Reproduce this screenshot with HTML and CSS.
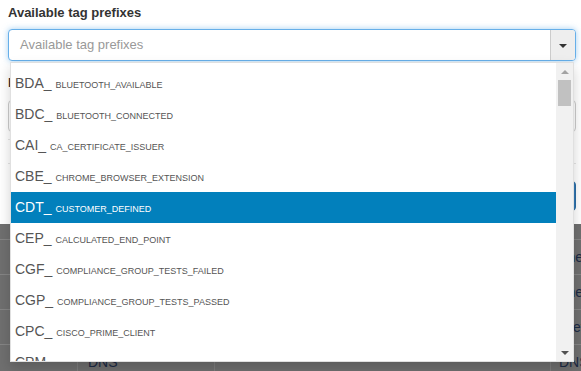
FILE: index.html
```html
<!DOCTYPE html>
<html>
<head>
<meta charset="utf-8">
<link rel="stylesheet" href="styles.css">
</head>
<body>
<div class="modal">
  <label class="label">Available tag prefixes</label>
  <div class="select-wrap">
    <div class="input-group focused">
      <div class="field placeholder">Available tag prefixes</div>
      <div class="toggle"><span class="caret"></span></div>
    </div>
    <div class="dropdown">
      <div class="options">
        <div class="option">BDA_ <small>bluetooth_available</small></div>
        <div class="option">BDC_ <small>bluetooth_connected</small></div>
        <div class="option">CAI_ <small>ca_certificate_issuer</small></div>
        <div class="option">CBE_ <small>chrome_browser_extension</small></div>
        <div class="option active">CDT_ <small>customer_defined</small></div>
        <div class="option">CEP_ <small>calculated_end_point</small></div>
        <div class="option">CGF_ <small>compliance_group_tests_failed</small></div>
        <div class="option">CGP_ <small>compliance_group_tests_passed</small></div>
        <div class="option">CPC_ <small>cisco_prime_client</small></div>
        <div class="option">CPM_ <small>calculated_profiling_method</small></div>
      </div>
      <div class="scrollbar">
        <div class="sb-btn"><span class="arrow-up"></span></div>
        <div class="thumb"></div>
        <div class="sb-track"></div>
        <div class="sb-btn"><span class="arrow-down"></span></div>
      </div>
    </div>
  </div>
  <label class="label label-second">Name</label>
  <div class="input-group">
    <div class="field"></div>
  </div>
  <div class="divider"></div>
  <div class="footer">
    <button class="btn">Save</button>
  </div>
</div>
<div class="backdrop">
  <div class="row head">
    <div class="cell c1"></div><div class="cell c2"></div><div class="cell c3"></div><div class="cell c4"></div>
  </div>
  <div class="row">
    <div class="cell c1"></div><div class="cell c2"></div><div class="cell c3"></div><div class="cell c4">The</div>
  </div>
  <div class="row">
    <div class="cell c1"></div><div class="cell c2"></div><div class="cell c3"></div><div class="cell c4">The</div>
  </div>
  <div class="row">
    <div class="cell c1"></div><div class="cell c2"></div><div class="cell c3"></div><div class="cell c4">Prev</div>
  </div>
  <div class="row">
    <div class="cell c1"></div><div class="cell c2">DNS</div><div class="cell c3"></div><div class="cell c4">DNS</div>
  </div>
</div>
</body>
</html>
```

FILE: styles.css
```css
* { box-sizing: border-box; }
html, body {
  margin: 0;
  padding: 0;
  width: 581px;
  height: 371px;
  overflow: hidden;
  font-family: "Liberation Sans", Arial, sans-serif;
  color: #333;
}
.modal {
  background: #fff;
  height: 224px;
  padding: 4px 5px 0 8px;
}
.label {
  display: block;
  font-size: 13px;
  font-weight: bold;
  line-height: 18px;
  margin-bottom: 7px;
  color: #333;
}
.label-second {
  margin-top: 13px;
  margin-bottom: 8px;
}
.select-wrap {
  position: relative;
}
.input-group {
  display: flex;
  height: 32px;
  border: 1px solid #ccc;
  border-radius: 4px;
  background: #fff;
  overflow: hidden;
}
.input-group.focused {
  border-color: #66afe9;
  box-shadow: 0 0 6px rgba(102, 175, 233, 0.6);
}
.field {
  flex: 1;
  padding: 0 11px;
  font-size: 13px;
  line-height: 30px;
}
.placeholder { color: #999; }
.toggle {
  width: 25px;
  background: #eee;
  border-left: 1px solid #ccc;
  display: flex;
  align-items: center;
  justify-content: center;
}
.caret {
  width: 0;
  height: 0;
  border-left: 4px solid transparent;
  border-right: 4px solid transparent;
  border-top: 4px solid #333;
  margin-top: 2px;
}
.dropdown {
  position: absolute;
  top: calc(100% + 1px);
  left: 2px;
  right: 2px;
  height: 300px;
  background: #fff;
  border: 1px solid rgba(0, 0, 0, 0.12);
  box-shadow: 0 6px 12px rgba(0, 0, 0, 0.175);
  display: flex;
  z-index: 10;
}
.options {
  flex: 1;
  padding-top: 5px;
  overflow: hidden;
}
.option {
  height: 31px;
  line-height: 31px;
  padding-left: 4px;
  font-size: 14px;
  color: #555;
  white-space: nowrap;
}
.option small {
  font-size: 9px;
  text-transform: uppercase;
}
.option.active {
  background: #0280bc;
  color: #fff;
}
.scrollbar {
  width: 17px;
  background: #f1f1f1;
  display: flex;
  flex-direction: column;
}
.sb-btn {
  height: 17px;
  display: flex;
  align-items: center;
  justify-content: center;
}
.arrow-up {
  width: 0; height: 0;
  border-left: 4px solid transparent;
  border-right: 4px solid transparent;
  border-bottom: 4px solid #a3a3a3;
}
.arrow-down {
  width: 0; height: 0;
  border-left: 4px solid transparent;
  border-right: 4px solid transparent;
  border-top: 4px solid #505050;
}
.thumb {
  height: 26px;
  margin: 0 2px;
  background: #c1c1c1;
}
.sb-track { flex: 1; }
.divider {
  margin-top: 7px;
  height: 1px;
  width: 40%;
  background: #e5e5e5;
}
.footer {
  margin-top: 23px;
  border-top: 1px solid #e5e5e5;
  padding-top: 17px;
  display: flex;
  justify-content: flex-end;
}
.btn {
  height: 30px;
  width: 80px;
  background: #337ab7;
  border: 1px solid #2e6da4;
  border-radius: 4px;
  color: #fff;
  font-family: inherit;
  font-size: 13px;
}
.backdrop {
  background: #6f6f6f;
  height: 147px;
}
.row {
  display: flex;
  height: 35px;
  border-bottom: 1px solid #858585;
}
.row.head {
  height: 16px;
}
.cell {
  font-size: 14px;
  line-height: 34px;
  color: #1c2a44;
  white-space: nowrap;
  overflow: hidden;
  border-right: 1px solid #7d7d7d;
}
.row.head .cell { border-right: none; }
.c1 { width: 78px; }
.c2 { width: 137px; padding-left: 10px; }
.c3 { width: 336px; }
.c4 { flex: 1; padding-left: 8px; border-right: none; }
```
